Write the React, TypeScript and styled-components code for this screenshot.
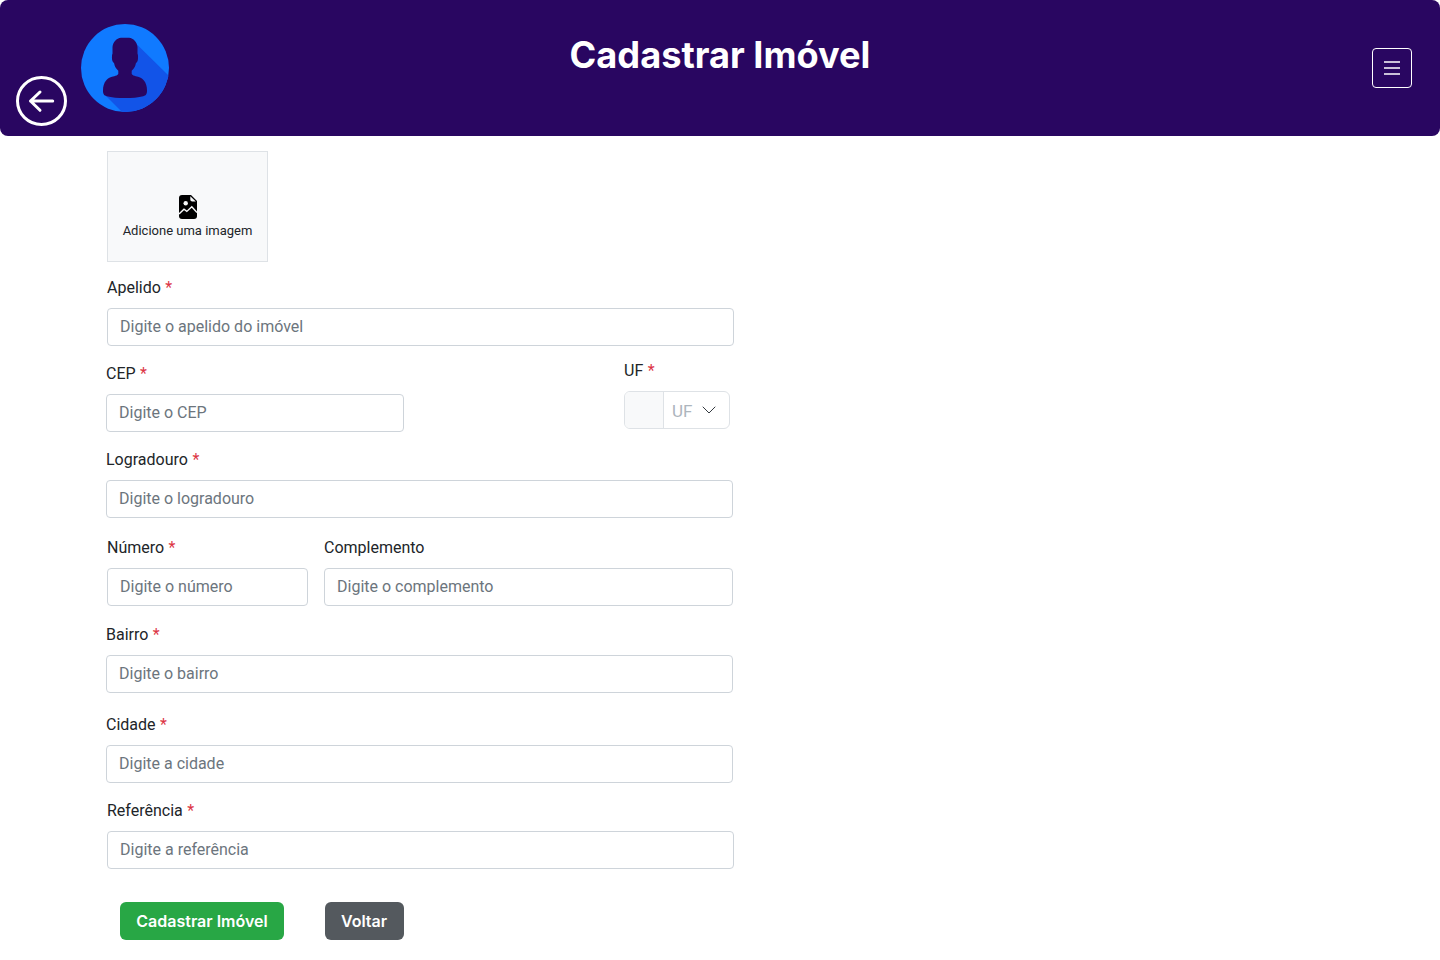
import React from "react";
import styled, { createGlobalStyle } from "styled-components";

const GlobalStyle = createGlobalStyle`
  *, *::before, *::after { box-sizing: border-box; }
  body {
    margin: 0;
    background: #fff;
    color: #212529;
    font: 400 16px/24px Roboto, sans-serif;
  }
`;

const Header = styled.header`
  display: grid;
  grid-template-columns: 1fr auto 1fr;
  height: 136px;
  padding: 0 28px 0 16px;
  border-radius: 8px;
  background: #290661;
`;

const HeaderStart = styled.div`
  display: flex;
  align-items: center;
  gap: 13px;
  margin-right: -12px;
`;

const BackButton = styled.button`
  align-self: flex-end;
  width: 52px;
  height: 52px;
  margin-bottom: 9px;
  padding: 0;
  border: 0;
  background: none;
  svg { display: block; }
`;

const Avatar = styled.svg`
  display: block;
  width: 88px;
  height: 88px;
`;

const Title = styled.h1`
  margin: 32px 0 0 12px;
  color: #fff;
  font: 700 36.2px/46px Inter, sans-serif;
  white-space: nowrap;
`;

const MenuButton = styled.button`
  display: grid;
  place-items: center;
  place-self: center end;
  width: 40px;
  height: 40px;
  padding: 0;
  border: 1px solid #fff;
  border-radius: 4px;
  background: none;
`;

const Form = styled.form`
  width: 734px;
  padding: 15px 0 0 106px;
`;

const ImagePicker = styled.button`
  display: flex;
  flex-direction: column;
  align-items: center;
  width: 161px;
  height: 111px;
  margin: 0 0 14px 1px;
  padding: 43px 0 0;
  border: 1px solid #dee2e6;
  background: #f8f9fa;
  color: #212529;
  font: 400 13px/20px Roboto, sans-serif;
  white-space: nowrap;
`;

const PickerText = styled.span`
  margin: 2px 0 0;
`;

const Row = styled.div<{ $after: number; $indent?: number }>`
  display: flex;
  align-items: flex-end;
  margin: 0 0 ${(p) => p.$after}px ${(p) => p.$indent ?? 0}px;
`;

const FieldBox = styled.div<{ $width: number; $push?: number; $lift?: number }>`
  width: ${(p) => p.$width}px;
  margin: 0 0 ${(p) => p.$lift ?? 0}px ${(p) => p.$push ?? 0}px;
`;

const Label = styled.label`
  display: block;
  margin-bottom: 8px;
  white-space: nowrap;
`;

const Required = styled.span`
  margin-left: 0.5px;
  color: #dc3545;
`;

const Input = styled.input`
  display: block;
  width: 100%;
  height: 38px;
  padding: 5px 12px 7px;
  border: 1px solid #ced4da;
  border-radius: 4px;
  background: #fff;
  color: #212529;
  font: inherit;
  &::placeholder { color: #6c757d; opacity: 1; }
`;

const Select = styled.div`
  display: flex;
  height: 38px;
  overflow: hidden;
  border: 1px solid #dee2e6;
  border-radius: 6px;
  color: #adb5bd;
`;

const SelectAddon = styled.span`
  width: 39px;
  border-right: 1px solid #dee2e6;
  background: #f8f9fa;
`;

const SelectValue = styled.span`
  display: flex;
  flex: 1;
  align-items: center;
  gap: 9px;
  padding-left: 8px;
  font-size: 17px;
`;

const SelectText = styled.span`
  padding-top: 2px;
`;

const Actions = styled.div`
  display: flex;
  gap: 41px;
  padding-left: 14px;
`;

const Button = styled.button<{ $color: string; $width: number; $trim?: number }>`
  width: ${(p) => p.$width}px;
  height: 38px;
  padding: 0 ${(p) => p.$trim ?? 0}px 0 0;
  border: 0;
  border-radius: 6px;
  background: ${(p) => p.$color};
  color: #fff;
  font: 600 16px/24px Inter, sans-serif;
  white-space: nowrap;
`;

type FieldProps = { label: string; placeholder: string; width: number; push?: number; optional?: boolean };

function Field({ label, placeholder, width, push, optional }: FieldProps) {
  return (
    <FieldBox $width={width} $push={push}>
      <Label>{label}{!optional && <Required> *</Required>}</Label>
      <Input placeholder={placeholder} />
    </FieldBox>
  );
}

export default function App() {
  return (
    <>
      <GlobalStyle />
      <Header>
        <HeaderStart>
          <BackButton type="button" aria-label="Voltar">
            <svg width="52" height="52" viewBox="0 0 52 52" fill="none" stroke="#fff" strokeWidth="3" strokeLinecap="round" strokeLinejoin="round">
              <ellipse cx="25.500" cy="26" rx="24" ry="23.500" />
              <path d="M36.700 26H14.500M24 17L14.500 26l9.500 9.300" />
            </svg>
          </BackButton>
          <Avatar viewBox="0 0 88 88">
            <defs>
              <clipPath id="disc"><circle cx="44" cy="44" r="44" /></clipPath>
            </defs>
            <g clipPath="url(#disc)">
              <path fill="#107aff" d="M0 0h88v88H0z" />
              <path fill="#1254e8" d="M55 19.500L92 56V100H53L25 72z" />
            </g>
            <path
              fill="#290661"
              d="M40 13.700H48C52.500 14.200 56 18 56.500 23V29.500C57.300 31 57.200 35.500 56.500 37.300L54.800 39.500C54.500 41.500 53.700 43.500 52.300 45L50.700 46.800V50C51.500 51.300 53 51.700 54.700 52.200C58 53 60.500 53.700 62.500 56C65.200 59 66 62.500 66 66.500C66 70 65.200 71.300 62.300 72.200C57.500 73.600 50.500 74 44 74C37.500 74 30.500 73.600 25.700 72.200C22.800 71.300 22 70 22 66.500C22 62.500 22.800 59 25.500 56C27.500 53.700 30 53 33.300 52.200C35 51.700 36.500 51.300 37.300 50V46.800L35.700 45C34.300 43.500 33.500 41.500 33.200 39.500L31.500 37.300C30.800 35.500 30.700 31 31.500 29.500V23C32 18 35.500 14.200 40 13.700z"
            />
          </Avatar>
        </HeaderStart>
        <Title>Cadastrar Imóvel</Title>
        <MenuButton type="button" aria-label="Menu">
          <svg width="16" height="16" viewBox="0 0 16 16" stroke="#fff" strokeWidth="1.400">
            <path d="M0 2h16M0 8h16M0 14h16" />
          </svg>
        </MenuButton>
      </Header>
      <Form>
        <ImagePicker type="button">
          <svg width="18" height="24" viewBox="0 0 18 24">
            <path d="M3 0h9l6 6v15a3 3 0 0 1-3 3H3a3 3 0 0 1-3-3V3a3 3 0 0 1 3-3z" />
            <path fill="#f8f9fa" d="M11.300 1.200v3.300c0 1.200.8 2 2 2h3.500z" />
            <circle cx="6.700" cy="8.200" r="2.200" fill="#f8f9fa" />
            <path fill="none" stroke="#f8f9fa" strokeWidth="1.400" d="M0 19l5-4.800 2.800 2.200 5-4.700L18 17.500" />
          </svg>
          <PickerText>Adicione uma imagem</PickerText>
        </ImagePicker>
        <Row $after={13} $indent={1}>
          <Field label="Apelido" placeholder="Digite o apelido do imóvel" width={627} />
        </Row>
        <Row $after={16}>
          <Field label="CEP" placeholder="Digite o CEP" width={298} />
          <FieldBox $width={106} $push={220} $lift={3}>
            <Label>UF<Required> *</Required></Label>
            <Select>
              <SelectAddon />
              <SelectValue>
                <SelectText>UF</SelectText>
                <svg width="16" height="16" viewBox="0 0 16 16" fill="none" stroke="#343a40" strokeLinecap="round" strokeLinejoin="round">
                  <path d="M2 5l6 6 6-6" />
                </svg>
              </SelectValue>
            </Select>
          </FieldBox>
        </Row>
        <Row $after={18}>
          <Field label="Logradouro" placeholder="Digite o logradouro" width={627} />
        </Row>
        <Row $after={17} $indent={1}>
          <Field label="Número" placeholder="Digite o número" width={201} />
          <Field label="Complemento" placeholder="Digite o complemento" width={409} push={16} optional />
        </Row>
        <Row $after={20}>
          <Field label="Bairro" placeholder="Digite o bairro" width={627} />
        </Row>
        <Row $after={16}>
          <Field label="Cidade" placeholder="Digite a cidade" width={627} />
        </Row>
        <Row $after={33} $indent={1}>
          <Field label="Referência" placeholder="Digite a referência" width={627} />
        </Row>
        <Actions>
          <Button type="button" $color="#28a745" $width={164}>Cadastrar Imóvel</Button>
          <Button type="button" $color="#54595e" $width={79} $trim={1}>Voltar</Button>
        </Actions>
      </Form>
    </>
  );
}
